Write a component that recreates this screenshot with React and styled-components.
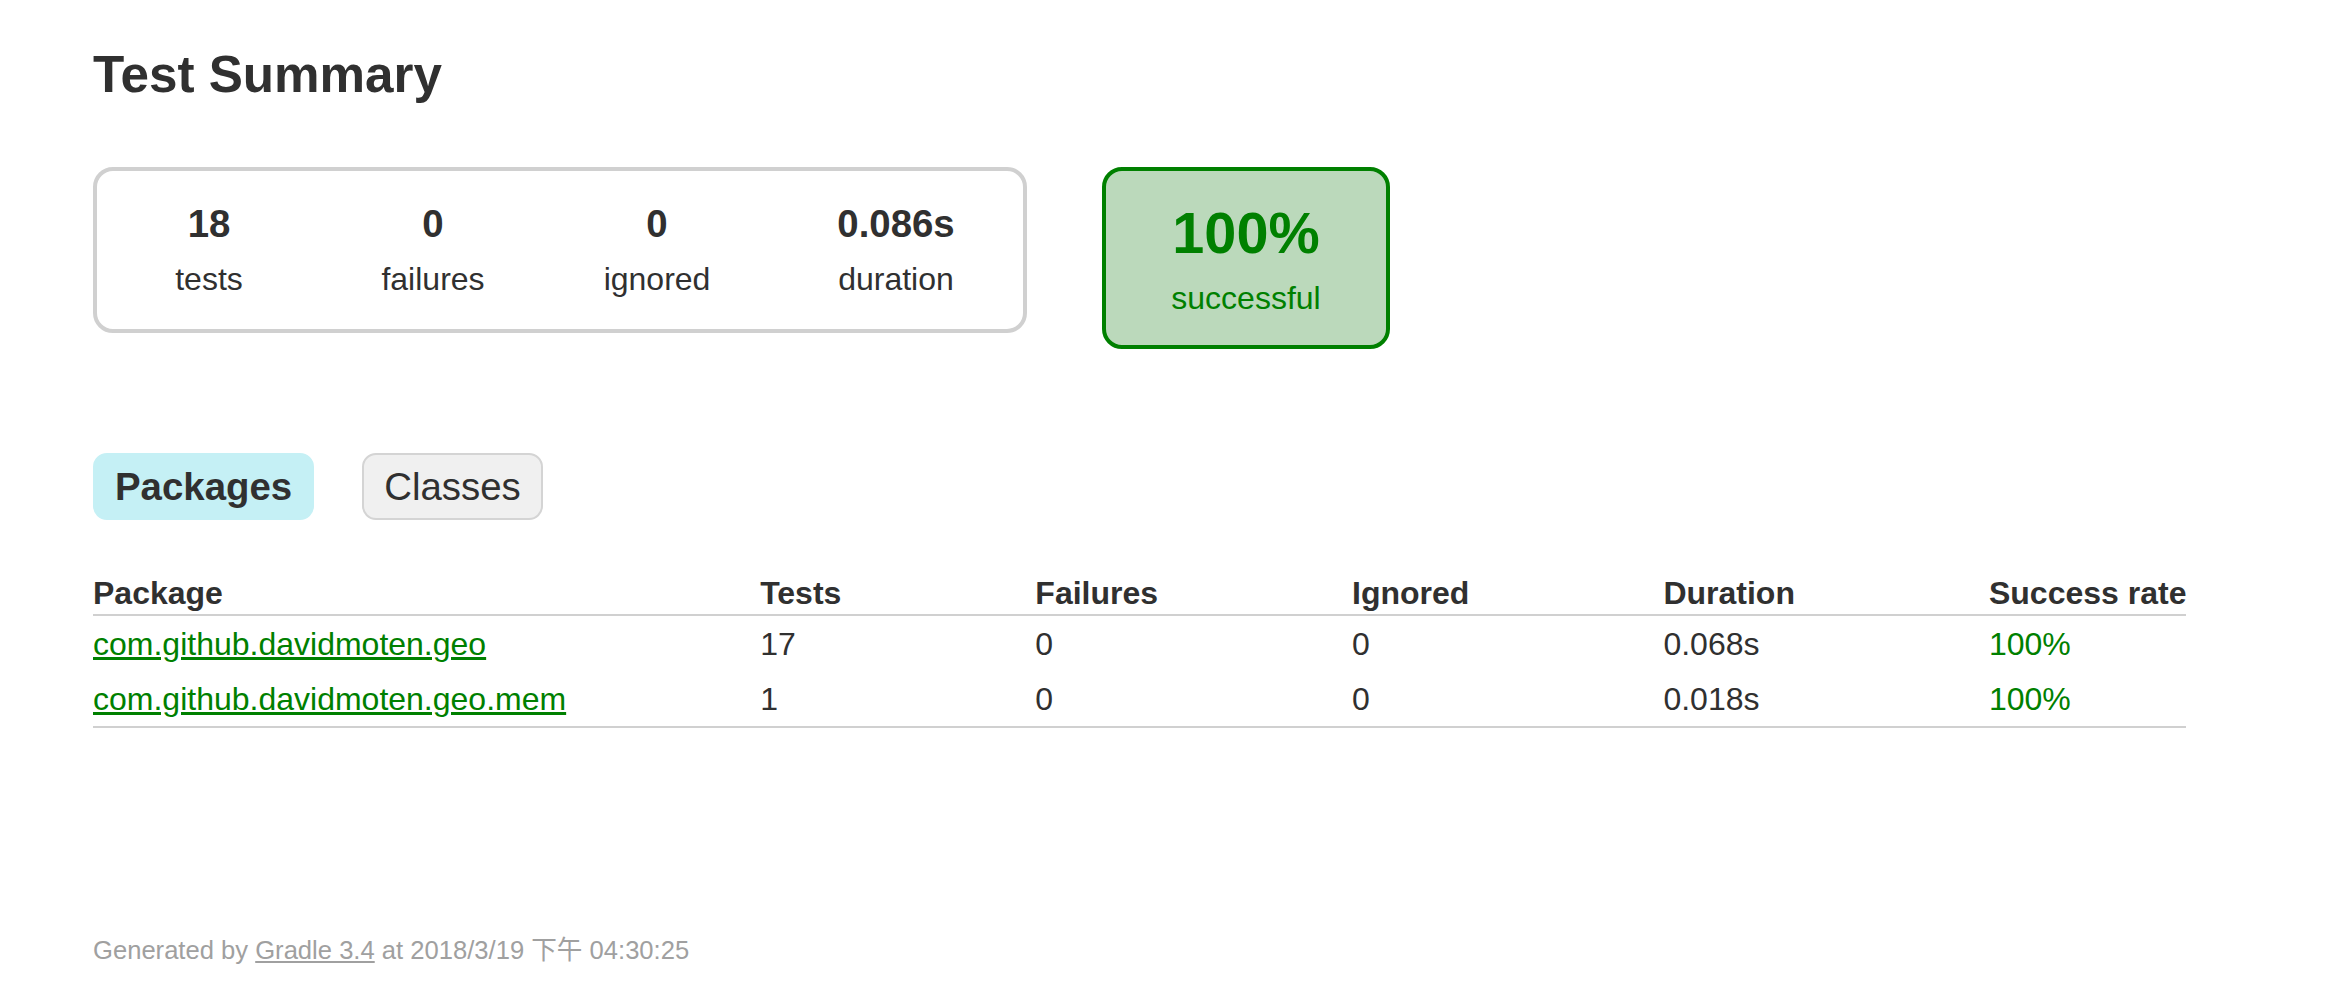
import React from "react";
import styled, { createGlobalStyle } from "styled-components";

const GlobalStyle = createGlobalStyle`
  html, body {
    margin: 0;
    padding: 0;
    background: #ffffff;
  }
  body {
    font-family: "Liberation Sans", Arial, "Noto Sans CJK TC", sans-serif;
    font-size: 32px;
    color: #303030;
  }
`;

const Page = styled.div`
  padding: 45px 93px 30px 93px;
`;

const Title = styled.h1`
  margin: 0;
  font-size: 51.2px;
  line-height: 59px;
  font-weight: bold;
  white-space: nowrap;
`;

const SummaryRow = styled.div`
  display: flex;
  align-items: flex-start;
  margin-top: 63px;
`;

const SummaryGroup = styled.div`
  display: flex;
  border: solid 4px #d0d0d0;
  border-radius: 20px;
`;

const InfoBox = styled.div`
  width: ${(p) => (p.$wide ? "250px" : "220px")};
  padding: 32px 2px;
  text-align: center;
`;

const Counter = styled.p`
  margin: 0 0 16px 0;
  font-size: 38.4px;
  line-height: 42px;
  font-weight: bold;
`;

const Label = styled.p`
  margin: 0;
  line-height: 36px;
`;

const SuccessBox = styled.div`
  width: 280px;
  margin-left: 75px;
  padding: 30px 0;
  text-align: center;
  border: solid 4px #008000;
  border-radius: 20px;
  background-color: #bbd9bb;
  color: #008000;
`;

const Percent = styled.p`
  margin: 0 0 16px 0;
  font-size: 57.6px;
  line-height: 64px;
  font-weight: bold;
`;

const SuccessLabel = styled.p`
  margin: 0;
  line-height: 34px;
`;

const TabList = styled.ul`
  display: flex;
  margin: 104px 0 0 0;
  padding: 0;
  list-style: none;
`;

const Tab = styled.li`
  padding: 10px 20px;
  margin-right: 48px;
  border-radius: 14px;
  border: solid 2px ${(p) => (p.$selected ? "#c5f0f5" : "#d4d4d4")};
  background-color: ${(p) => (p.$selected ? "#c5f0f5" : "#f0f0f0")};
  font-size: 38.4px;
  line-height: 43px;
  font-weight: ${(p) => (p.$selected ? "bold" : "normal")};
  white-space: nowrap;
  cursor: pointer;
`;

const ReportTable = styled.table`
  margin-top: 53px;
  border-collapse: collapse;
  border-bottom: solid #d0d0d0 2px;
`;

const Th = styled.th`
  text-align: left;
  white-space: nowrap;
  padding: 2px 0 2px 194px;
  line-height: 37px;
  font-weight: bold;
  border-bottom: solid #d0d0d0 2px;
  &:first-child {
    padding-left: 0;
  }
`;

const Td = styled.td`
  white-space: nowrap;
  padding: 11px 0 9px 194px;
  line-height: 35px;
  color: ${(p) => (p.$success ? "#008000" : "#303030")};
  &:first-child {
    padding-left: 0;
  }
`;

const PackageLink = styled.a`
  color: #008000;
  text-decoration: underline;
`;

const Footer = styled.div`
  margin-top: 207px;
  font-size: 25.6px;
  line-height: 30px;
  color: #a0a0a0;
  white-space: nowrap;
`;

const FooterLink = styled.a`
  color: #a0a0a0;
  text-decoration: underline;
`;

const counters = [
  { value: "18", label: "tests" },
  { value: "0", label: "failures" },
  { value: "0", label: "ignored" },
  { value: "0.086s", label: "duration", wide: true },
];

const packages = [
  { name: "com.github.davidmoten.geo", tests: 17, failures: 0, ignored: 0, duration: "0.068s", rate: "100%" },
  { name: "com.github.davidmoten.geo.mem", tests: 1, failures: 0, ignored: 0, duration: "0.018s", rate: "100%" },
];

const App = () => {
  return (
    <Page>
      <GlobalStyle />
      <Title>Test Summary</Title>
      <SummaryRow>
        <SummaryGroup>
          {counters.map((c) => (
            <InfoBox key={c.label} $wide={c.wide}>
              <Counter>{c.value}</Counter>
              <Label>{c.label}</Label>
            </InfoBox>
          ))}
        </SummaryGroup>
        <SuccessBox>
          <Percent>100%</Percent>
          <SuccessLabel>successful</SuccessLabel>
        </SuccessBox>
      </SummaryRow>
      <TabList>
        <Tab $selected>Packages</Tab>
        <Tab>Classes</Tab>
      </TabList>
      <ReportTable>
        <thead>
          <tr>
            <Th>Package</Th>
            <Th>Tests</Th>
            <Th>Failures</Th>
            <Th>Ignored</Th>
            <Th>Duration</Th>
            <Th>Success rate</Th>
          </tr>
        </thead>
        <tbody>
          {packages.map((p) => (
            <tr key={p.name}>
              <Td>
                <PackageLink href="#">{p.name}</PackageLink>
              </Td>
              <Td>{p.tests}</Td>
              <Td>{p.failures}</Td>
              <Td>{p.ignored}</Td>
              <Td>{p.duration}</Td>
              <Td $success>{p.rate}</Td>
            </tr>
          ))}
        </tbody>
      </ReportTable>
      <Footer>
        Generated by <FooterLink href="#">Gradle 3.4</FooterLink> at 2018/3/19 下午 04:30:25
      </Footer>
    </Page>
  );
};

export default App;
